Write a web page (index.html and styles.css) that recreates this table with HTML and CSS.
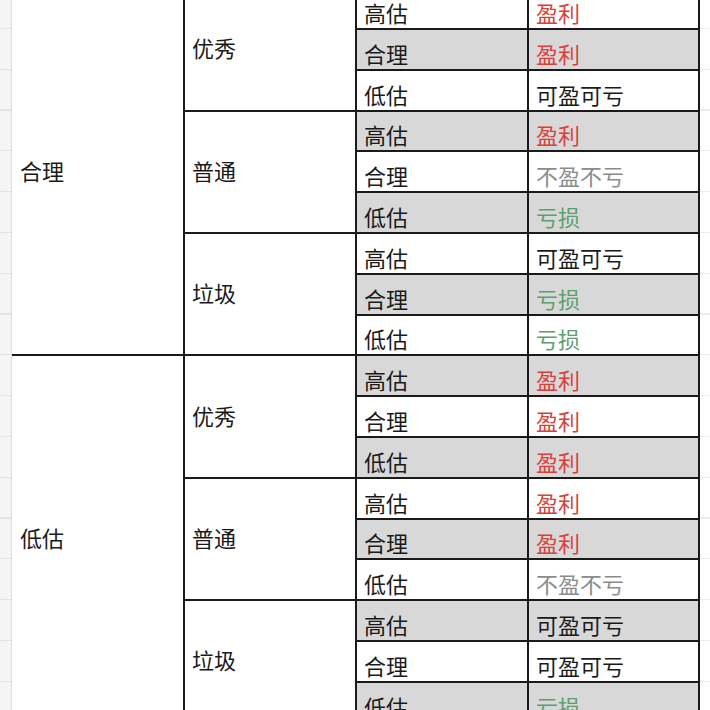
FILE: index.html
```html
<!DOCTYPE html>
<html lang="zh">
<head>
<meta charset="utf-8">
<title>表格</title>
<link rel="stylesheet" href="styles.css">
</head>
<body>
<div class="sheet">
  <div class="strip strip-left"></div>
  <div class="table">
    <div class="cell c1 span9">合理</div>
    <div class="cell c2 span3">优秀</div>
    <div class="cell c3">高估</div><div class="cell c4 red">盈利</div>
    <div class="cell c3 g">合理</div><div class="cell c4 g red">盈利</div>
    <div class="cell c3">低估</div><div class="cell c4">可盈可亏</div>
    <div class="cell c2 span3">普通</div>
    <div class="cell c3 g">高估</div><div class="cell c4 g red">盈利</div>
    <div class="cell c3">合理</div><div class="cell c4 grey">不盈不亏</div>
    <div class="cell c3 g">低估</div><div class="cell c4 g green">亏损</div>
    <div class="cell c2 span3">垃圾</div>
    <div class="cell c3">高估</div><div class="cell c4">可盈可亏</div>
    <div class="cell c3 g">合理</div><div class="cell c4 g green">亏损</div>
    <div class="cell c3">低估</div><div class="cell c4 green">亏损</div>

    <div class="cell c1 span9">低估</div>
    <div class="cell c2 span3">优秀</div>
    <div class="cell c3 g">高估</div><div class="cell c4 g red">盈利</div>
    <div class="cell c3">合理</div><div class="cell c4 red">盈利</div>
    <div class="cell c3 g">低估</div><div class="cell c4 g red">盈利</div>
    <div class="cell c2 span3">普通</div>
    <div class="cell c3">高估</div><div class="cell c4 red">盈利</div>
    <div class="cell c3 g">合理</div><div class="cell c4 g red">盈利</div>
    <div class="cell c3">低估</div><div class="cell c4 grey">不盈不亏</div>
    <div class="cell c2 span3">垃圾</div>
    <div class="cell c3 g">高估</div><div class="cell c4 g">可盈可亏</div>
    <div class="cell c3">合理</div><div class="cell c4">可盈可亏</div>
    <div class="cell c3 g">低估</div><div class="cell c4 g green">亏损</div>
  </div>
  <div class="strip strip-right"></div>
</div>
</body>
</html>
```

FILE: styles.css
```css
html, body {
  margin: 0;
  padding: 0;
  background: #ffffff;
  overflow: hidden;
  height: 710px;
}

.sheet {
  display: flex;
  margin-top: -10.8px;
  font-family: "Noto Sans CJK SC", "Noto Sans", sans-serif;
  font-size: 22px;
  color: #1a1a1a;
}

.strip {
  flex: none;
}

.strip-left {
  width: 11px;
  border-right: 1px solid #dddddd;
  background-color: #f5f5f5;
  background-image: repeating-linear-gradient(to bottom,
    transparent 0, transparent 38.8px,
    #e2e2e2 38.8px, #e2e2e2 40px,
    transparent 40px, transparent 40.8px);
}

.strip-right {
  flex: 1;
  background-image: repeating-linear-gradient(to bottom,
    transparent 0, transparent 38.8px,
    #ececec 38.8px, #ececec 40px,
    transparent 40px, transparent 40.8px);
}

.table {
  display: grid;
  grid-template-columns: 171px 170px 170px 169px;
  grid-auto-rows: 38.8px;
  gap: 2px;
  padding-right: 2px;
  background: #1a1a1a;
}

.cell {
  background: #ffffff;
  display: flex;
  align-items: flex-end;
  padding: 0 0 5px 7px;
  line-height: 22px;
  white-space: nowrap;
}

.c1 { grid-column: 1; padding-left: 8px; }
.c2 { grid-column: 2; }
.c3 { grid-column: 3; }
.c4 { grid-column: 4; }

.span9 { grid-row: span 9; align-items: center; padding-bottom: 4px; }
.span3 { grid-row: span 3; align-items: center; padding-bottom: 4px; }

.g { background: #d8d8d8; }

.red { color: #d9403a; }
.green { color: #5e9f6f; }
.grey { color: #8c8c8c; }
```
